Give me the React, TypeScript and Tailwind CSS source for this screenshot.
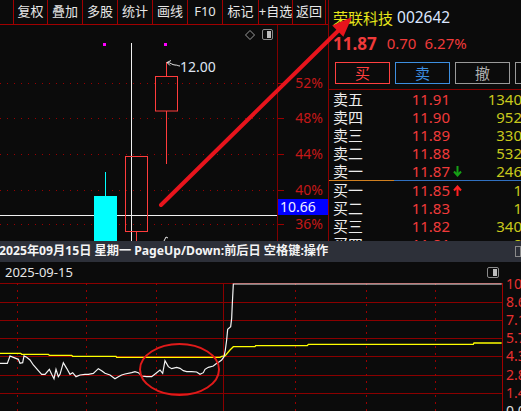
const sells = [
  { name: '卖五', price: '11.91', vol: '1340' },
  { name: '卖四', price: '11.90', vol: '952' },
  { name: '卖三', price: '11.89', vol: '330' },
  { name: '卖二', price: '11.88', vol: '532' },
  { name: '卖一', price: '11.87', vol: '246', arrow: 'down' },
]

const buys = [
  { name: '买一', price: '11.85', vol: '1', arrow: 'up' },
  { name: '买二', price: '11.83', vol: '1' },
  { name: '买三', price: '11.82', vol: '340' },
  { name: '买四', price: '11.81', vol: '8' },
]

const tools = ['复权', '叠加', '多股', '统计', '画线', 'F10', '标记', '+自选', '返回']
const toolW = [34, 35, 35, 35, 35, 35, 36, 34, 33]

const pctLabels = [
  { t: '52%', y: 58 },
  { t: '48%', y: 93 },
  { t: '44%', y: 129 },
  { t: '40%', y: 165 },
  { t: '36%', y: 199 },
]

const volLabels = [
  { t: '10.', y: 1 },
  { t: '8.6', y: 19 },
  { t: '7.1', y: 37 },
  { t: '5.7', y: 55 },
  { t: '4.3', y: 73 },
  { t: '2.8', y: 92 },
  { t: '1.4', y: 110 },
  { t: '0.0', y: 128 },
]

const whiteLine =
  '0,250 22,250 30,228 40,232 55,238 60,250 68,248 72,228 80,232 90,240 100,255 115,272 125,283 135,283 148,268 155,283 162,296 168,268 175,290 180,283 190,248 200,265 210,283 218,278 228,290 240,285 255,283 265,283 280,280 295,266 305,272 315,280 330,285 345,296 355,290 365,285 375,282 395,278 405,275 415,278 425,288 440,290 455,290 470,278 480,270 488,280 495,242 505,260 515,266 530,262 540,265 550,272 560,275 575,275 590,276 600,283 610,278 615,268 625,262 640,258 650,250 658,245 665,240 672,230 676,210 680,180 683,148 692,140 695,115 697,70 700,12 1505,12'

const yellowLine =
  '0,220 62,220 65,223 145,223 148,226 215,226 218,229 348,229 350,232 660,232 665,229 675,228 680,222 690,210 700,200 712,200 765,200 767,197 922,197 925,193 1420,193 1422,189 1505,189'

function OrderRow({ row }: { row: { name: string; price: string; vol: string; arrow?: string } }) {
  return (
    <div className="flex h-[18px] items-center text-[15px] leading-[18px]">
      <span className="w-[60px] pl-[4px] text-[#ececec]">{row.name}</span>
      <span className="w-[61px] text-right text-[#f03a3a]">{row.price}</span>
      <span className="flex w-[14px] justify-center">
        {row.arrow === 'down' && (
          <svg width="9" height="11" viewBox="0 0 9 11">
            <path d="M4.5 0 V9 M1 5.5 L4.5 9.5 L8 5.5" stroke="#16a016" strokeWidth="2" fill="none" />
          </svg>
        )}
        {row.arrow === 'up' && (
          <svg width="9" height="11" viewBox="0 0 9 11">
            <path d="M4.5 11 V2 M1 5.5 L4.5 1.5 L8 5.5" stroke="#ff2020" strokeWidth="2" fill="none" />
          </svg>
        )}
      </span>
      <span className="flex-1 text-right text-[#c8c81c] -mr-[1px]">{row.vol}</span>
    </div>
  )
}

function PanelIcon() {
  return (
    <svg width="12" height="11" viewBox="0 0 12 11">
      <rect x="0.5" y="0.5" width="11" height="10" rx="1.5" fill="none" stroke="#8a8a8a" />
      <rect x="6" y="2" width="4" height="7" fill="#bdbdbd" />
    </svg>
  )
}

export default function App() {
  return (
    <div className="relative h-[411px] w-[521px] overflow-hidden bg-[#0b0b0b] font-['Noto_Sans','Noto_Sans_CJK_SC',sans-serif] text-white">
      <div className="flex h-[241px]">
        {/* left: toolbar + k-line chart */}
        <div className="w-[328px] shrink-0">
          <div className="flex h-[25px] border-b border-[#a00000] pl-[13px]">
            {tools.map((t, i) => (
              <div
                key={t}
                style={{ width: toolW[i] }}
                className="flex shrink-0 items-center justify-center whitespace-nowrap border-l border-[#a00000] text-[13px] text-[#e6e6e6]"
              >
                {t}
              </div>
            ))}
            <div className="border-l border-[#a00000]" />
          </div>

          <div className="relative h-[216px]">
            <svg width="328" height="216" className="absolute inset-0">
              {pctLabels.map((p) => (
                <g key={p.t}>
                  <line x1="0" x2="277" y1={p.y + 0.5} y2={p.y + 0.5} stroke="#9a0000" strokeDasharray="1 6" />
                  <line x1="278" x2="284" y1={p.y + 0.5} y2={p.y + 0.5} stroke="#9a0000" />
                </g>
              ))}
              <line x1="277.5" x2="277.5" y1="0" y2="216" stroke="#800000" />
              <line x1="0" x2="277" y1="190.5" y2="190.5" stroke="#f0f0f0" />
              <line x1="131.5" x2="131.5" y1="18" y2="216" stroke="#f0f0f0" />
              <rect x="103" y="18" width="3" height="3" fill="#ff00ff" />
              <rect x="164" y="18" width="3" height="3" fill="#ff00ff" />
              {/* cyan candle */}
              <line x1="105.5" x2="105.5" y1="147" y2="171" stroke="#00ffff" />
              <rect x="94" y="171" width="23" height="50" fill="#00ffff" />
              {/* red hollow candles */}
              <rect x="125.5" y="131.5" width="22" height="75" fill="none" stroke="#ff3c3c" />
              <line x1="136.5" x2="136.5" y1="206" y2="216" stroke="#ff3c3c" />
              <rect x="155.5" y="51.5" width="22" height="34.5" fill="none" stroke="#ff3c3c" />
              <line x1="166.5" x2="166.5" y1="37" y2="51.5" stroke="#ff3c3c" />
              <line x1="166.5" x2="166.5" y1="86" y2="139" stroke="#ff3c3c" />
              <path
                d="M167 37.5 L171 35.5 M167 37.5 L170 40.5 M167 37.5 C171 37.5 172 40 175 40 S178 41 180 41"
                stroke="#e8e8e8"
                strokeWidth="1"
                fill="none"
              />
              <path d="M164 216 L166 212 L168 213" stroke="#e8e8e8" fill="none" />
              {/* diamond + panel icons */}
              <path d="M250 5.5 L254.5 10 L250 14.5 L245.5 10 Z" fill="none" stroke="#9a9a9a" />
              <rect x="262.5" y="4.5" width="10" height="10" rx="1.5" fill="none" stroke="#8a8a8a" />
              <rect x="267" y="6" width="4" height="7" fill="#bdbdbd" />
            </svg>

            {pctLabels.map((p) => (
              <div
                key={p.t}
                style={{ top: p.y - 10 }}
                className="absolute right-[5px] text-[14px] leading-[20px] text-[#c41818]"
              >
                {p.t}
              </div>
            ))}

            <div className="absolute left-[180px] top-[32px] text-[14px] leading-[20px] text-[#dfe4f2]">12.00</div>

            <div className="absolute left-[278px] top-[174px] flex h-[16px] w-[50px] items-center bg-[#0000ff] pl-[2px] text-[14px] leading-none text-[#f0f0ff]">
              10.66
            </div>
          </div>
        </div>

        {/* right: quote panel */}
        <div className="min-w-0 flex-1 overflow-hidden border-l border-[#8a0000]">
          <div className="mt-[7px] flex h-[22px] items-center gap-[4px] pl-[4px] text-[15px] leading-none">
            <span className="text-[#e6e61a]">荣联科技</span>
            <span className="text-[15.5px] text-[#dbe6ff]">002642</span>
          </div>
          <div className="mt-[2px] flex h-[24px] items-center pl-[4px] leading-none text-[#f03a3a]">
            <span className="text-[17px] font-bold">11.87</span>
            <span className="ml-[10px] text-[15px]">0.70</span>
            <span className="ml-[8px] text-[15px]">6.27%</span>
          </div>
          <div className="mt-[7px] flex h-[22px] gap-[5px] pl-[6px] text-[15px] leading-none">
            <div className="flex w-[55px] shrink-0 items-center justify-center border border-[#ff4040] text-[#ff4040]">买</div>
            <div className="flex w-[55px] shrink-0 items-center justify-center border border-[#3d8fe0] text-[#3d8fe0]">卖</div>
            <div className="flex w-[55px] shrink-0 items-center justify-center border border-[#9a9a9a] text-[#b0b0b0]">撤</div>
            <div className="w-[55px] shrink-0 border border-[#9a9a9a]" />
          </div>
          <div className="mt-[5px] border-t border-[#8a0000]">
            {sells.map((r) => (
              <OrderRow key={r.name} row={r} />
            ))}
            <div className="flex h-[1px]">
              <div className="w-[65px] bg-[#d08020]" />
              <div className="flex-1 bg-[#3070c0]" />
            </div>
            {buys.map((r) => (
              <OrderRow key={r.name} row={r} />
            ))}
          </div>
        </div>
      </div>

      {/* status bar */}
      <div className="flex h-[21px] items-center justify-between bg-[#2d3039] text-[12.2px] font-bold leading-none text-[#f4f4f4]">
        <span className="-ml-[1px] whitespace-nowrap">2025年09月15日 星期一 PageUp/Down:前后日 空格键:操作</span>
        <span className="h-[11px] w-[6px] border border-[#8a8a8a]" />
      </div>

      {/* bottom: intraday chart */}
      <div className="flex h-[21px] items-center justify-between pl-[5px] pr-[22px]">
        <span className="text-[13px] leading-none text-[#e6e6e6]">2025-09-15</span>
        <PanelIcon />
      </div>
      <div className="flex h-[128px]">
        <svg width="502" height="128" className="shrink-0">
          {[0.5, 19.5, 37.5, 55.5, 73.5, 92.5, 110.5].map((y) => (
            <line key={y} x1="0" x2="502" y1={y} y2={y} stroke="#8a0000" />
          ))}
          {[17.5, 86.5, 156.5, 295.5, 366.5, 435.5].map((x) => (
            <line key={x} x1={x} x2={x} y1="0" y2="128" stroke="#9a0000" strokeDasharray="2 5" />
          ))}
          <line x1="223.5" x2="223.5" y1="0" y2="128" stroke="#8a0000" />
          <g transform="translate(0,-3) scale(0.33333)">
            <polyline points={yellowLine} fill="none" stroke="#ffff00" strokeWidth="1.3" vectorEffect="non-scaling-stroke" />
            <polyline points={whiteLine} fill="none" stroke="#f4f4f4" strokeWidth="1.2" vectorEffect="non-scaling-stroke" />
          </g>
          <ellipse cx="179.5" cy="86.5" rx="39.5" ry="25.5" fill="none" stroke="#e01a1a" strokeWidth="2" />
        </svg>
        <div className="relative flex-1 border-l border-[#a00000]">
          {volLabels.map((v) => (
            <div
              key={v.t}
              style={{ top: v.y - 10 }}
              className={`absolute left-[3px] text-[14px] leading-[20px] ${v.t === '0.0' ? 'text-[#e0e0e0]' : 'text-[#e83030]'}`}
            >
              {v.t}
            </div>
          ))}
        </div>
      </div>

      {/* annotation arrow */}
      <svg width="521" height="411" className="pointer-events-none absolute inset-0">
        <line x1="161" y1="205" x2="340" y2="29" stroke="#e8141c" strokeWidth="4" strokeLinecap="round" />
        <polygon points="352,17 343.4,36.8 332.2,25.4" fill="#e8141c" />
      </svg>
    </div>
  )
}
